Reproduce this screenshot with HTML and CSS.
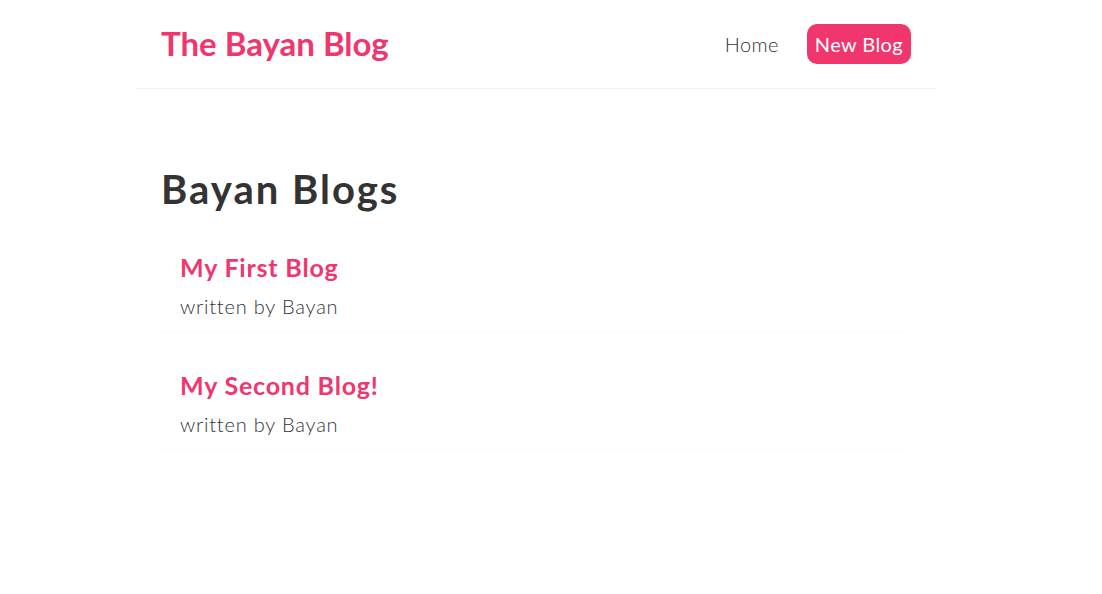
FILE: index.html
```html
<!DOCTYPE html>
<html lang="en">
<head>
<meta charset="utf-8">
<title>The Bayan Blog</title>
<link rel="stylesheet" href="styles.css">
</head>
<body>
<div class="app">
  <nav class="navbar">
    <h1 class="brand">The Bayan Blog</h1>
    <div class="links">
      <a class="link" href="#">Home</a>
      <a class="link link-new" href="#">New Blog</a>
    </div>
  </nav>
  <main class="content">
    <h2 class="page-title">Bayan Blogs</h2>
    <div class="blog-list">
      <div class="blog-preview">
        <h2 class="blog-title">My First Blog</h2>
        <p class="blog-author">written by Bayan</p>
      </div>
      <div class="blog-preview">
        <h2 class="blog-title">My Second Blog!</h2>
        <p class="blog-author">written by Bayan</p>
      </div>
    </div>
  </main>
</div>
</body>
</html>
```
FILE: styles.css
```css
* {
  margin: 0;
  box-sizing: border-box;
}
body {
  margin: 0;
  padding-right: 30px;
  background: #fff;
  font-family: "Lato", "Noto Sans", sans-serif;
  color: #333;
  font-size: 20px;
}
.navbar {
  max-width: 800px;
  margin: 0 auto;
  padding: 24px 25px;
  height: 89px;
  display: flex;
  align-items: center;
  border-bottom: 1px solid #f2f2f2;
}
.brand {
  color: #f1356d;
  font-size: 33px;
  font-weight: 700;
  line-height: 1.2;
}
.links {
  margin-left: auto;
  display: flex;
  align-items: center;
}
.link {
  margin-left: 20px;
  padding: 7px 8px;
  text-decoration: none;
  color: #333;
  font-size: 20px;
  line-height: 26px;
  font-weight: 300;
  letter-spacing: 0.4px;
}
.link-new {
  color: #fff;
  background: #f1356d;
  border-radius: 10px;
  font-weight: 400;
}
.content {
  max-width: 800px;
  margin: 50px auto;
  padding: 25px;
}
.page-title {
  font-size: 40px;
  font-weight: 700;
  line-height: 50px;
  color: #333;
  letter-spacing: 2px;
}
.blog-preview {
  padding: 12px 19px;
  margin: 25px 0;
  border-bottom: 1px solid #fafafa;
  width: 746px;
}
.blog-preview + .blog-preview {
  margin-top: 24px;
}
.blog-title {
  font-size: 25px;
  font-weight: 700;
  color: #f1356d;
  line-height: 32px;
  margin-bottom: 10px;
  letter-spacing: 0.8px;
}
.blog-author {
  font-size: 20px;
  line-height: 26px;
  color: #333;
  font-weight: 300;
  letter-spacing: 0.8px;
}
```
